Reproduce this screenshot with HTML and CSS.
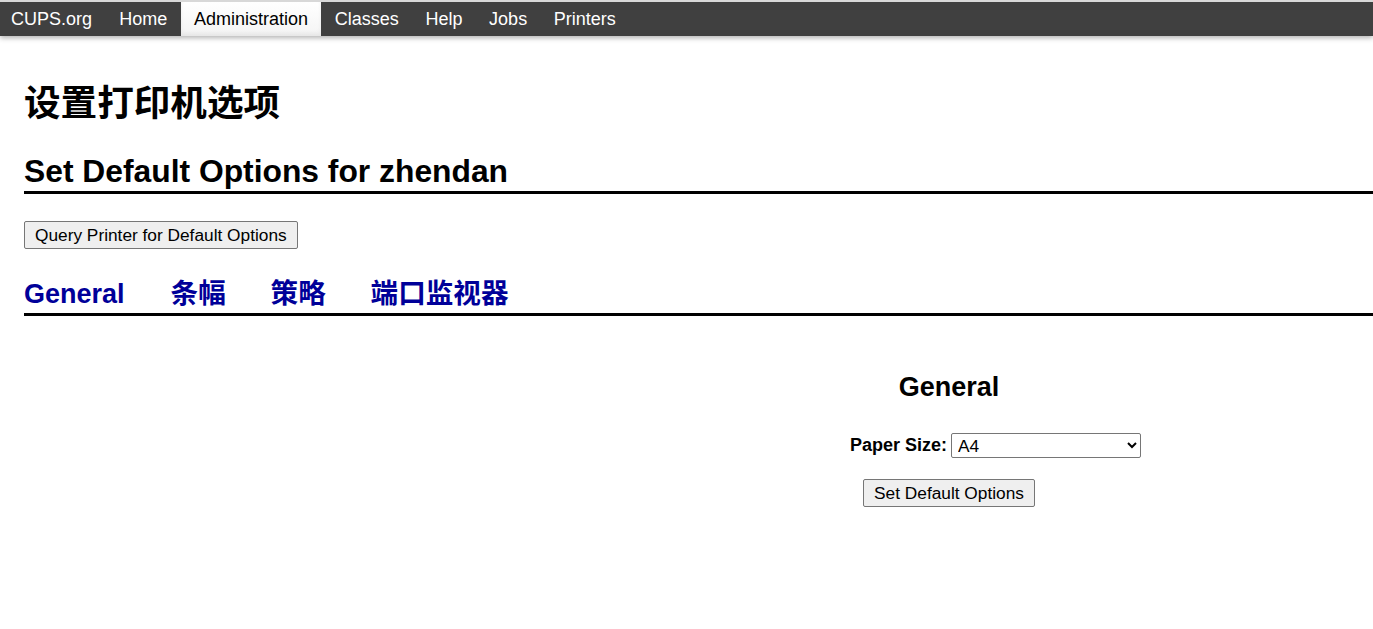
FILE: index.html
```html
<!DOCTYPE html>
<html lang="zh">
<head>
<meta charset="utf-8">
<title>设置打印机选项 - CUPS</title>
<link rel="stylesheet" href="styles.css">
</head>
<body>
<div class="header">
  <ul class="nav">
    <li><a href="#">CUPS.org</a></li>
    <li><a href="#">Home</a></li>
    <li class="active"><a href="#">Administration</a></li>
    <li><a href="#">Classes</a></li>
    <li><a href="#">Help</a></li>
    <li><a href="#">Jobs</a></li>
    <li><a href="#">Printers</a></li>
  </ul>
</div>
<div class="body">
  <div class="row">
    <h1 class="title">设置打印机选项</h1>
    <h2 class="title">Set Default Options for zhendan</h2>
    <form class="query">
      <button type="button" class="btn">Query Printer for Default Options</button>
    </form>
    <h2 class="tabs">
      <a href="#" class="first">General</a>
      <a href="#" class="cjk">条幅</a>
      <a href="#" class="cjk">策略</a>
      <a href="#" class="cjk">端口监视器</a>
    </h2>
    <div class="panel">
      <h3 class="title">General</h3>
      <div class="field">
        <label class="label">Paper Size:</label>
        <div class="control">
          <select class="select">
            <option>A4</option>
            <option>Letter</option>
          </select>
        </div>
      </div>
      <div class="submit">
        <button type="button" class="btn">Set Default Options</button>
      </div>
    </div>
  </div>
</div>
</body>
</html>
```

FILE: styles.css
```css
html {
  overflow: hidden;
}
body {
  margin: 0;
  font-family: "Liberation Sans", Arial, "Noto Sans CJK SC", sans-serif;
  font-size: 18px;
  color: #000;
  background: #fff;
}
.header {
  border-top: 2px solid #d8d8d8;
  background: #404040;
  box-shadow: 0 2px 5px rgba(0, 0, 0, 0.3);
  height: 34px;
}
.nav {
  list-style: none;
  margin: 0;
  padding: 0;
  display: flex;
  height: 34px;
}
.nav li {
  display: flex;
}
.nav a {
  display: block;
  padding: 0 13.33px;
  line-height: 34px;
  color: #fff;
  text-decoration: none;
  font-size: 18px;
}
.nav li:first-child a {
  padding-left: 11px;
  padding-right: 14px;
}
.nav .active a {
  color: #000;
  background: linear-gradient(#fff, #f4f4f4);
  box-shadow: inset 0 -3px 4px rgba(0, 0, 0, 0.06);
}
.body {
  padding: 0 24px;
  width: 1850px;
}
h1.title {
  font-size: 36.6px;
  font-weight: bold;
  margin: 44px 0 0;
  line-height: 48px;
}
h2.title {
  font-size: 31.8px;
  font-weight: bold;
  margin: 23px 0 0;
  line-height: 40px;
  border-bottom: 3px solid #000;
}
.query {
  margin: 27px 0 0;
}
.btn {
  font-family: "Liberation Sans", Arial, sans-serif;
  font-size: 17.3px;
  padding: 2px 10px;
  height: 28px;
  border: 1px solid #767676;
  border-radius: 2px;
  background: #efefef;
  color: #000;
}
h2.tabs {
  font-size: 27px;
  font-weight: bold;
  margin: 27px 0 0;
  padding-bottom: 1px;
  line-height: 36px;
  border-bottom: 3px solid #000;
  display: flex;
  gap: 44.8px;
}
h2.tabs a {
  color: #000099;
  text-decoration: none;
}
h2.tabs .first {
  margin-right: 1.2px;
}
h2.tabs .cjk {
  font-size: 27.6px;
}
.panel {
  margin-top: 53px;
}
h3.title {
  font-size: 27px;
  font-weight: bold;
  text-align: center;
  margin: 0;
  line-height: 36px;
}
.field {
  display: grid;
  grid-template-columns: 1fr 1fr;
  gap: 4px;
  margin-top: 28px;
  align-items: center;
}
.label {
  text-align: right;
  font-weight: bold;
}
.select {
  width: 190px;
  height: 25px;
  font-family: "Liberation Sans", Arial, sans-serif;
  font-size: 17.3px;
  border: 1px solid #767676;
  border-radius: 2px;
  background: #fff;
  padding: 0 2px;
}
.submit {
  text-align: center;
  margin-top: 21px;
}
```
